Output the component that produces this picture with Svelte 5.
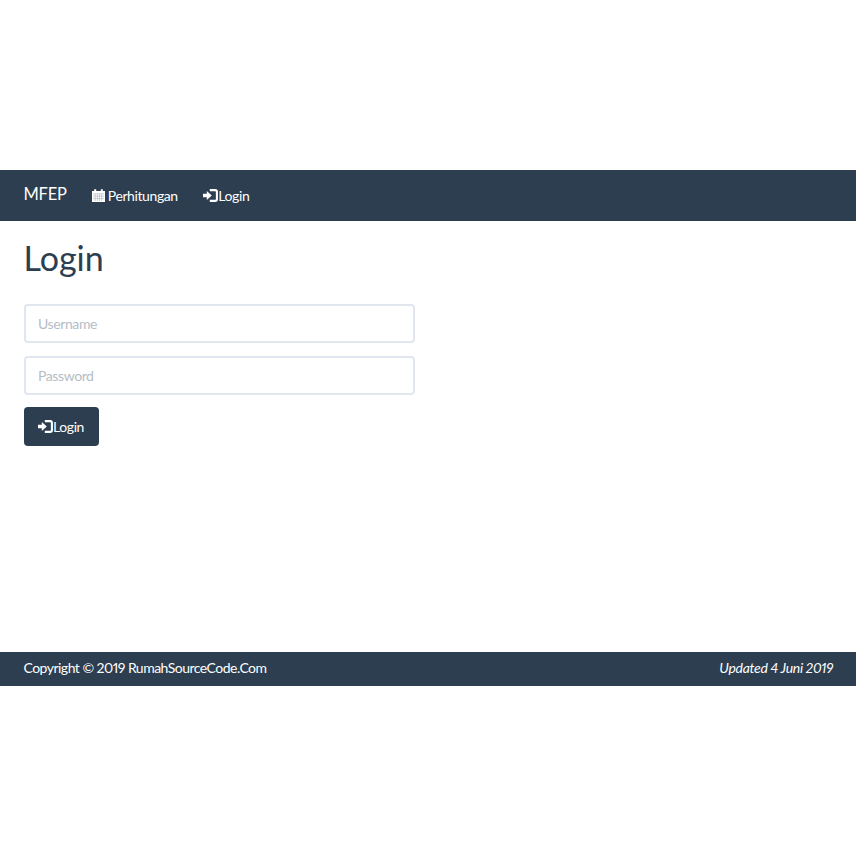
<script>
	let username = '';
	let password = '';
</script>

<div class="page">
	<nav class="navbar">
		<a class="brand" href="#top">MFEP</a>
		<a class="nav-link" href="#top">
			<svg class="icon-cal" viewBox="0 0 13 13" aria-hidden="true">
				<path d="M0 2h13v11H0z" fill="#fff" />
				<path d="M2.2 0.2h2v2.4h-2zM8.8 0.2h2v2.4h-2z" fill="#fff" />
				<path d="M1 4.8h11M1 7.2h11M1 9.6h11M3.2 4.8v7.2M5.4 4.8v7.2M7.6 4.8v7.2M9.8 4.8v7.2" stroke="#9aa5b1" stroke-width="0.5" fill="none" />
			</svg>
			Perhitungan
		</a>
		<a class="nav-link" href="#top">
			<svg class="icon-login" viewBox="0 0 15 13" aria-hidden="true">
				<path d="M0 4.8h3.8V2L8.8 6.5 3.8 11V8.2H0z" fill="#fff" />
				<path d="M6.8 1.1h5.4q1.7 0 1.7 1.7v7.4q0 1.7-1.7 1.7H6.8" fill="none" stroke="#fff" stroke-width="2.1" />
			</svg>Login
		</a>
	</nav>

	<main class="content">
		<h1>Login</h1>
		<form on:submit|preventDefault>
			<input type="text" placeholder="Username" bind:value={username} />
			<input type="password" placeholder="Password" bind:value={password} />
			<button type="submit">
				<svg class="icon-login" viewBox="0 0 15 13" aria-hidden="true">
					<path d="M0 4.8h3.8V2L8.8 6.5 3.8 11V8.2H0z" fill="#fff" />
					<path d="M6.8 1.1h5.4q1.7 0 1.7 1.7v7.4q0 1.7-1.7 1.7H6.8" fill="none" stroke="#fff" stroke-width="2.1" />
				</svg>Login
			</button>
		</form>
	</main>

	<footer>
		<span class="copyright">Copyright © 2019 RumahSourceCode.Com</span>
		<em class="updated">Updated 4 Juni 2019</em>
	</footer>
</div>

<style>
	:global(body) {
		margin: 0;
		background: #fff;
		font-family: Lato, 'Open Sans', sans-serif;
		font-size: 14px;
		font-variant-numeric: proportional-nums;
		letter-spacing: -0.4px;
		color: #2c3e50;
	}

	.page {
		padding-top: 170px;
	}

	.navbar {
		display: flex;
		align-items: center;
		height: 51px;
		padding: 0 23.5px;
		background: #2c3e50;
	}

	.navbar a {
		color: #fff;
		text-decoration: none;
	}

	.brand {
		font-size: 16.5px;
		letter-spacing: -0.2px;
		margin-right: 25.5px;
		margin-top: -3px;
	}

	.nav-link {
		display: flex;
		align-items: center;
		margin-right: 25.5px;
		font-size: 14px;
	}

	.icon-cal {
		width: 13px;
		height: 13px;
		margin-right: 2.5px;
	}

	.icon-login {
		width: 15px;
		height: 13px;
		flex: none;
	}

	.content {
		height: 431px;
		box-sizing: border-box;
		padding: 0 23.5px;
	}

	h1 {
		margin: 0;
		padding-top: 17px;
		font-size: 34px;
		font-weight: 400;
		line-height: 40px;
		letter-spacing: 0;
	}

	form {
		display: flex;
		flex-direction: column;
		align-items: flex-start;
		gap: 13px;
		margin-top: 26px;
	}

	input {
		width: 391.5px;
		height: 39px;
		box-sizing: border-box;
		padding: 0 12.5px;
		border: 2px solid #e1e7ef;
		border-radius: 4px;
		background: #fff;
		font-family: inherit;
		font-size: 14px;
		letter-spacing: inherit;
		color: #2c3e50;
		outline: none;
	}

	input::placeholder {
		color: #b4bdc7;
		opacity: 1;
	}

	button {
		display: flex;
		align-items: center;
		height: 39px;
		margin-top: -1px;
		padding: 0 14.5px;
		border: 0;
		border-radius: 4px;
		background: #2c3e50;
		color: #fff;
		font-family: inherit;
		font-size: 14px;
		letter-spacing: inherit;
	}

	footer {
		display: flex;
		justify-content: space-between;
		align-items: center;
		height: 34px;
		box-sizing: border-box;
		padding: 0 23px 3px 23.5px;
		background: #2c3e50;
		color: #fff;
	}

	.copyright {
		letter-spacing: -0.52px;
	}

	.updated {
		letter-spacing: -0.3px;
	}
</style>
